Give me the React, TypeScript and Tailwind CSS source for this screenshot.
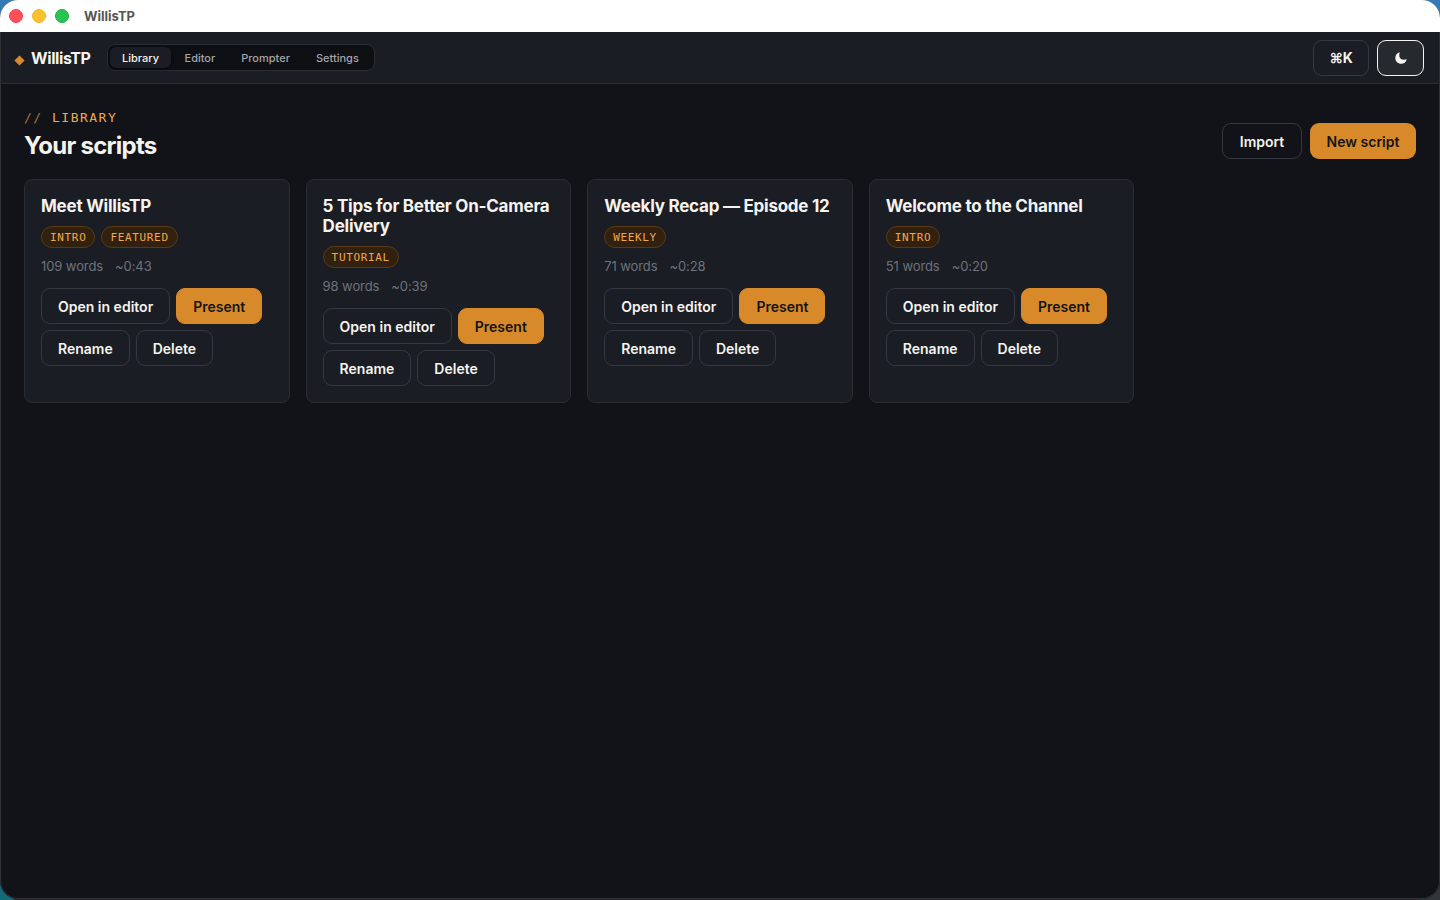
import React from "react";

type Script = { title: string; tags: string[]; words: number; time: string };

const scripts: Script[] = [
  { title: "Meet WillisTP", tags: ["INTRO", "FEATURED"], words: 109, time: "~0:43" },
  { title: "5 Tips for Better On-Camera Delivery", tags: ["TUTORIAL"], words: 98, time: "~0:39" },
  { title: "Weekly Recap — Episode 12", tags: ["WEEKLY"], words: 71, time: "~0:28" },
  { title: "Welcome to the Channel", tags: ["INTRO"], words: 51, time: "~0:20" },
];

function Button({ children, primary = false }: { children: React.ReactNode; primary?: boolean }) {
  return (
    <button
      className={
        primary
          ? "flex h-9 items-center rounded-[9px] border border-[#d88a2a] bg-[#d88a2a] px-4 pt-px text-sm font-semibold whitespace-nowrap text-[#131418]"
          : "flex h-9 items-center rounded-[9px] border border-[#353841] px-4 pt-px text-sm font-semibold whitespace-nowrap text-[#f5f3ee]"
      }
    >
      {children}
    </button>
  );
}

function Card({ script }: { script: Script }) {
  return (
    <article className="flex flex-col rounded-lg border border-[#2a2d34] bg-[#1a1d24] p-4">
      <h2 className="text-[17px] leading-5 font-bold tracking-[-0.014em] text-[#f5f3ee]">{script.title}</h2>
      <div className="mt-2.5 flex gap-1.5">
        {script.tags.map((t) => (
          <span
            key={t}
            className="flex h-[22px] items-center rounded-full border border-[#593a15] bg-[#33210f] px-2 pt-0.5 font-['DejaVu_Sans_Mono',monospace] text-[11px] tracking-[0.66px] text-[#f0a850]"
          >
            {t}
          </span>
        ))}
      </div>
      <div className="mt-[9px] mb-px flex gap-3 text-[13px] leading-[18px] tracking-[-0.007em] text-[#6f727a]">
        <span>{script.words} words</span>
        <span>{script.time}</span>
      </div>
      <div className="mt-3 flex flex-wrap gap-1.5">
        <Button>Open in editor</Button>
        <Button primary>Present</Button>
        <Button>Rename</Button>
        <Button>Delete</Button>
      </div>
    </article>
  );
}

export default function App() {
  return (
    <div className="h-[900px] w-[1440px] overflow-hidden bg-[linear-gradient(to_bottom,#347ab5_0%,#347ab5_50%,transparent_50%),linear-gradient(to_right,#146b78_0,#146b78_12px,#2b2226_16px,#2b2226_1420px,#30363a_1424px)] font-['Inter',sans-serif]">
      <div className="flex h-[899px] flex-col overflow-hidden rounded-[18px] bg-[#121318]">
        <div className="flex h-8 shrink-0 items-center bg-white pl-[9px]">
          <div className="flex gap-[9px]">
            <span className="size-3.5 rounded-full border border-[#f2404a] bg-[#ff5058]" />
            <span className="size-3.5 rounded-full border border-[#eeb51c] bg-[#f9c12f]" />
            <span className="size-3.5 rounded-full border border-[#16b340] bg-[#28c453]" />
          </div>
          <span className="mt-0.5 ml-[15px] text-[13px] font-bold text-[#555555]">WillisTP</span>
        </div>
        <div className="flex min-h-0 flex-1 flex-col rounded-b-[18px] border-x border-b border-[#303238]">
          <header className="flex h-[52px] shrink-0 items-center border-b border-[#2a2d34] bg-[#1a1d24] pr-[15px] pl-[13px]">
            <svg className="mt-[5px] size-[11px]" viewBox="0 0 11 11">
              <path d="M5.5.4 10.6 5.5 5.5 10.6.4 5.5Z" fill="#d88a2a" />
            </svg>
            <span className="ml-1.5 w-[60px] text-base font-bold tracking-[-0.025em] text-[#f5f3ee]">WillisTP</span>
            <nav className="ml-4 flex h-[27px] items-center rounded-lg border border-[#2a2d34] bg-[#0e0f12] p-0.5 text-[11px] font-medium text-[#a3a5ab]">
              <span className="flex h-[21px] items-center rounded-md bg-[#1a1d24] px-3 pt-0.5 text-[#f5f3ee] shadow-[0_1px_3px_rgba(0,0,0,0.6)]">Library</span>
              <span className="pt-0.5 pr-[13px] pl-[13.5px]">Editor</span>
              <span className="px-[13px] pt-0.5">Prompter</span>
              <span className="px-[13px] pt-0.5">Settings</span>
            </nav>
            <div className="ml-auto flex gap-2">
              <button className="flex h-9 w-14 items-center justify-center rounded-[9px] border border-[#353841] pt-px text-sm font-bold tracking-[-0.03em] text-[#f5f3ee]">
                ⌘K
              </button>
              <button className="flex h-9 w-[47px] items-center justify-center rounded-[9px] border border-[#f5f3ee] bg-[#262a2e]">
                <svg className="size-3" viewBox="0 0 12 12">
                  <path d="M4.8.2C3.9 3.2 4.2 5.3 5.5 6.5 6.9 7.8 9 8 11.8 7.2 11 10.1 8.9 11.8 6.2 11.8 2.8 11.8.3 9.3.3 6 .3 3.2 2 .9 4.8.2Z" fill="#f5f3ee" />
                </svg>
              </button>
            </div>
          </header>
          <main className="px-[23px]">
            <div className="flex h-[95px] items-end justify-between pb-5">
              <div className="-mb-0.5 flex flex-col">
                <div className="font-['DejaVu_Sans_Mono',monospace] text-[13px] leading-[18px] tracking-[1.5px] whitespace-pre text-[#f0a850]">
                  <span className="text-[#a37337]">{"// "}</span>LIBRARY
                </div>
                <h1 className="mt-1 text-2xl leading-[30px] font-bold tracking-[-0.03em] text-[#f5f3ee]">Your scripts</h1>
              </div>
              <div className="flex gap-2">
                <button className="flex h-9 w-20 items-center justify-center rounded-[9px] border border-[#353841] pt-px text-sm font-semibold text-[#f5f3ee]">
                  Import
                </button>
                <button className="flex h-9 w-[106px] items-center justify-center rounded-[9px] bg-[#d88a2a] pt-px text-sm font-semibold whitespace-nowrap text-[#131418]">
                  New script
                </button>
              </div>
            </div>
            <div className="grid grid-cols-5 gap-4">
              {scripts.map((s) => (
                <Card key={s.title} script={s} />
              ))}
            </div>
          </main>
        </div>
      </div>
    </div>
  );
}
